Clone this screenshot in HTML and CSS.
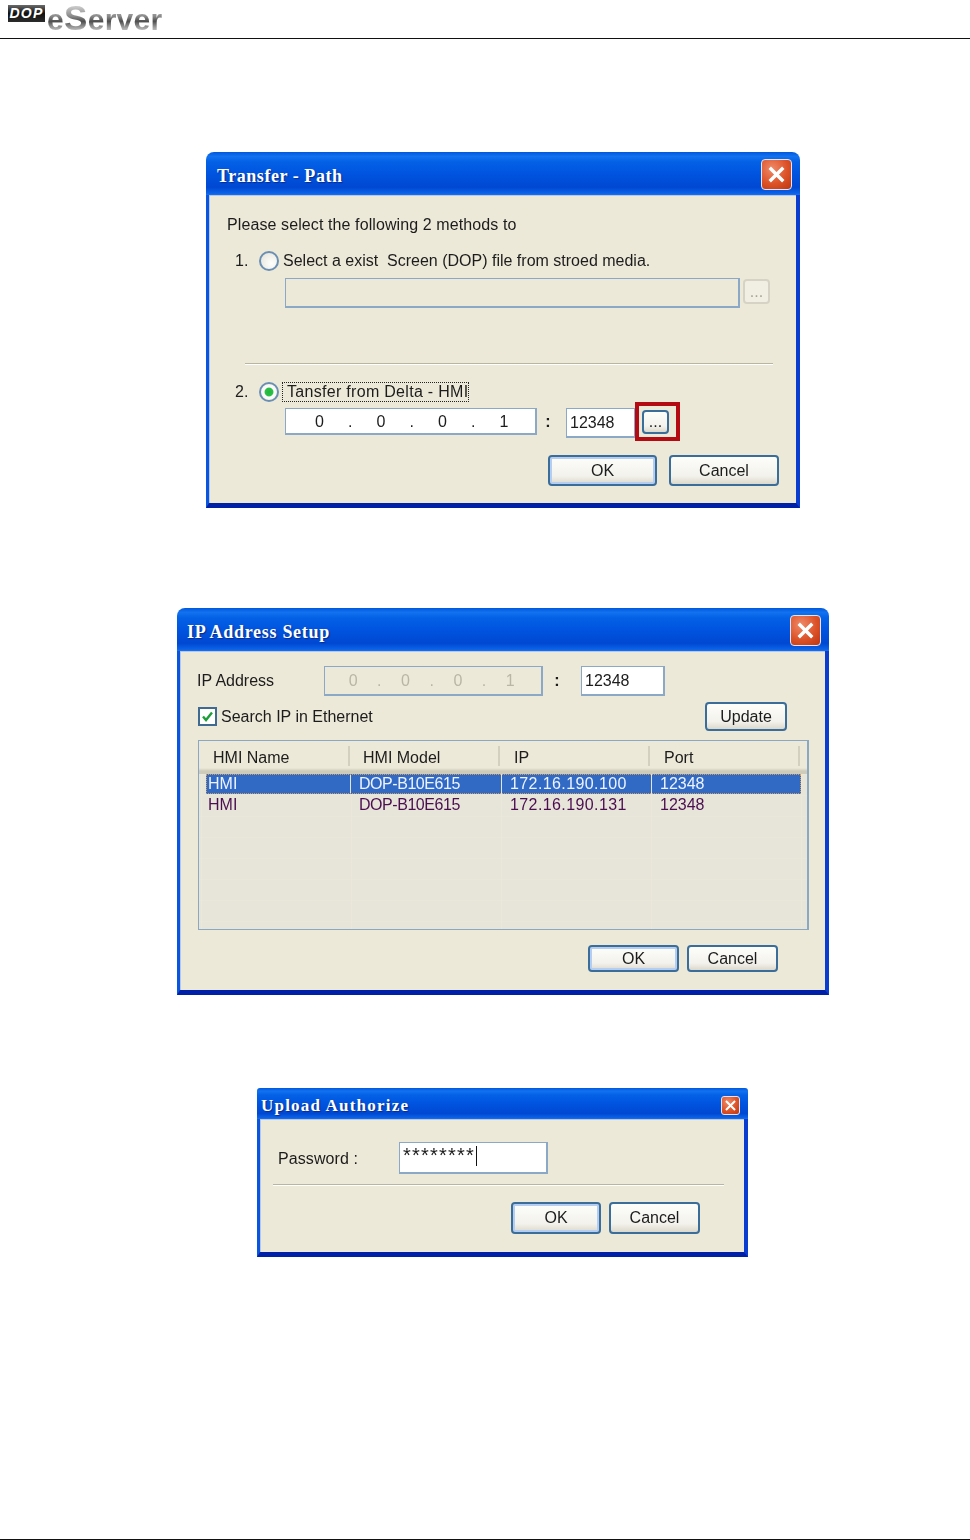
FILE: index.html
```html
<!DOCTYPE html>
<html lang="en">
<head>
    <meta charset="UTF-8">
    <title>DOP eServer - Transfer Path</title>
    <link rel="stylesheet" href="styles.css">
</head>
<body>
    <div class="page">
        <header class="top">
            <div class="dop-logo">DOP</div>
            <div class="eserver-logo">e<span class="big-s">S</span>erver</div>
        </header>

        <main class="content">
            <!-- Transfer path dialog -->
            <section class="dialog dialog-transfer">
                <div class="titlebar">
                    <h2>Transfer - Path</h2>
                    <div class="close">
                        <svg viewBox="0 0 30 30"><path d="M8 8 L22 22 M22 8 L8 22"/></svg>
                    </div>
                </div>
                <div class="panel">
                    <p class="intro">Please select the following 2 methods to</p>
                    <div class="choice">
                        <span class="num">1.</span>
                        <span class="radio"></span>
                        <span class="choice-label">Select a exist&nbsp; Screen (DOP) file from stroed media.</span>
                    </div>
                    <div class="path-row">
                        <div class="field field-off path-field"></div>
                        <div class="btn btn-off browse-off">...</div>
                    </div>
                    <div class="rule rule-transfer"></div>
                    <div class="choice choice-two">
                        <span class="num">2.</span>
                        <span class="radio radio-on"></span>
                        <span class="choice-label focused">Tansfer from Delta - HMI</span>
                    </div>
                    <div class="ip-row">
                        <div class="field ip ip-wide">
                            <span>0</span><span>.</span><span>0</span><span>.</span><span>0</span><span>.</span><span>1</span>
                        </div>
                        <span class="colon">:</span>
                        <div class="field port-wide">12348</div>
                        <div class="highlight">
                            <div class="btn browse">...</div>
                        </div>
                    </div>
                    <div class="actions actions-transfer">
                        <div class="btn btn-default">OK</div>
                        <div class="btn">Cancel</div>
                    </div>
                </div>
            </section>

            <!-- IP setup dialog -->
            <section class="dialog dialog-ip">
                <div class="titlebar">
                    <h2>IP Address Setup</h2>
                    <div class="close">
                        <svg viewBox="0 0 30 30"><path d="M8 8 L22 22 M22 8 L8 22"/></svg>
                    </div>
                </div>
                <div class="panel">
                    <div class="address-row">
                        <span class="address-label">IP Address</span>
                        <div class="field field-off ip ip-narrow">
                            <span>0</span><span>.</span><span>0</span><span>.</span><span>0</span><span>.</span><span>1</span>
                        </div>
                        <span class="colon">:</span>
                        <div class="field port-narrow">12348</div>
                    </div>
                    <div class="search-row">
                        <span class="checkbox">
                            <svg viewBox="0 0 15 15"><path d="M3 7.5 L6 11 L12 3.5"/></svg>
                        </span>
                        <span>Search IP in Ethernet</span>
                        <div class="btn update">Update</div>
                    </div>
                    <div class="list">
                        <div class="list-head">
                            <div>HMI Name</div>
                            <div>HMI Model</div>
                            <div>IP</div>
                            <div>Port</div>
                        </div>
                        <div class="list-rows">
                            <div class="list-row selected">
                                <div>HMI</div>
                                <div>DOP-B10E615</div>
                                <div>172.16.190.100</div>
                                <div>12348</div>
                            </div>
                            <div class="list-row">
                                <div>HMI</div>
                                <div>DOP-B10E615</div>
                                <div>172.16.190.131</div>
                                <div>12348</div>
                            </div>
                        </div>
                    </div>
                    <div class="actions actions-ip">
                        <div class="btn btn-default">OK</div>
                        <div class="btn">Cancel</div>
                    </div>
                </div>
            </section>

            <!-- Password dialog -->
            <section class="dialog dialog-upload">
                <div class="titlebar">
                    <h2>Upload Authorize</h2>
                    <div class="close">
                        <svg viewBox="0 0 30 30"><path d="M7 7 L23 23 M23 7 L7 23"/></svg>
                    </div>
                </div>
                <div class="panel">
                    <div class="password-row">
                        <span class="password-label">Password :</span>
                        <div class="field password-field">********<span class="caret"></span></div>
                    </div>
                    <div class="rule rule-upload"></div>
                    <div class="actions actions-upload">
                        <div class="btn btn-default">OK</div>
                        <div class="btn">Cancel</div>
                    </div>
                </div>
            </section>
        </main>

        <footer class="bottom"></footer>
    </div>
</body>
</html>
```

FILE: styles.css
```css
* {
    box-sizing: border-box;
}

body {
    margin: 0;
    background: #fff;
    color: #1c1c1c;
    font-family: "Liberation Sans", Arial, sans-serif;
    font-size: 16px;
}

.page {
    display: flex;
    flex-direction: column;
    min-height: 1540px;
}

/* page header */
.top {
    display: flex;
    height: 39px;
    border-bottom: 1px solid #111;
    padding-left: 8px;
}

.dop-logo {
    width: 37px;
    height: 17px;
    margin-top: 5px;
    background: linear-gradient(180deg, #6a6a6a, #111 50%, #2c2c2c);
    color: #fff;
    font-size: 14px;
    font-weight: bold;
    font-style: italic;
    line-height: 17px;
    letter-spacing: 1.2px;
    text-align: center;
}

.eserver-logo {
    margin: -1px 0 0 2px;
    height: 36px;
    background: linear-gradient(180deg, #c8c8c8 22%, #8a8a8a 48%, #4e4e4e 62%, #9a9a9a 78%, #c0c0c0 88%);
    -webkit-background-clip: text;
    background-clip: text;
    color: transparent;
    font-size: 30px;
    font-weight: bold;
    line-height: 38px;
    letter-spacing: 0.3px;
    filter: blur(0.4px);
}

.big-s {
    font-size: 35px;
}

.content {
    display: flex;
    flex-direction: column;
    align-items: center;
    padding-left: 36px;
}

.bottom {
    margin-top: auto;
    border-top: 1px solid #111;
}

/* dialog frame */
.dialog {
    overflow: hidden;
    border-radius: 8px 8px 0 0;
    filter: blur(0.3px);
}

.dialog-transfer {
    width: 594px;
    margin-top: 113px;
}

.dialog-ip {
    width: 652px;
    margin-top: 100px;
}

.dialog-upload {
    width: 491px;
    margin: 93px 1px 0 0;
    border-radius: 3px 3px 0 0;
}

.titlebar {
    display: flex;
    align-items: center;
    justify-content: space-between;
    height: 43px;
    padding: 0 8px 0 11px;
    background: linear-gradient(180deg, #0058dc 0, #1272f0 10%, #0462e6 22%, #0054e0 50%, #0048d2 82%, #0a62e8 96%, #1a70ee 100%);
}

.titlebar h2 {
    margin: 5px 0 0;
    color: #fff;
    font-family: "Liberation Serif", serif;
    font-size: 18px;
    font-weight: bold;
    letter-spacing: 0.55px;
    text-shadow: 1px 1px 1px #0a2c8c;
}

.close {
    width: 31px;
    height: 31px;
    margin-top: 2px;
    border: 1px solid #dfe6f2;
    border-radius: 4px;
    background: radial-gradient(circle at 35% 30%, #ef8a68, #dc5228 55%, #bd3510);
}

.close svg {
    display: block;
    width: 100%;
    height: 100%;
}

.close path {
    fill: none;
    stroke: #fff;
    stroke-width: 3.5;
}

.panel {
    border-style: solid;
    border-width: 0 4px 5px 3px;
    border-color: #0a3fd4 #0a3cd0 #0020a8 #0a55e0;
    background: #ece9d8;
    box-shadow: inset 1px 1px 0 #b7c8e6;
}

/* shared controls */
.field {
    display: flex;
    align-items: center;
    border: 1px solid #8ba9c6;
    border-width: 1px 2px 2px 1px;
    background: #fff;
    padding-left: 3px;
}

.field-off {
    background: #ece9d8;
    color: #b9b6a6;
}

.btn {
    display: flex;
    align-items: center;
    justify-content: center;
    width: 110px;
    height: 31px;
    border: 2px solid #3b6d9a;
    border-radius: 4px;
    background: linear-gradient(180deg, #fdfdfb, #f3f2ec 70%, #dcd8cc);
}

.btn-default {
    box-shadow: inset 0 0 0 2px #b4cdf0;
}

.btn-off {
    border-color: #d6d3c5;
    color: #a8a596;
    background: #f1efe4;
}

.actions {
    display: flex;
    justify-content: flex-end;
}

.rule {
    height: 2px;
    background: #b9b5a3;
    border-bottom: 1px solid #fff;
}

.colon {
    width: 28px;
    text-align: center;
    font-weight: bold;
}

.ip span {
    text-align: center;
}

/* transfer dialog */
.dialog-transfer .panel {
    height: 313px;
    padding: 20px 17px 0 18px;
}

.intro {
    height: 20px;
    margin: 0;
    line-height: 20px;
    letter-spacing: 0.1px;
}

.choice {
    display: flex;
    align-items: center;
    height: 22px;
    margin-top: 15px;
}

.choice-two {
    margin-top: 16px;
}

.num {
    width: 32px;
    padding-left: 8px;
}

.radio {
    width: 20px;
    height: 20px;
    flex: none;
    margin-right: 4px;
    border: 2px solid #6b8fb3;
    border-radius: 50%;
    background: radial-gradient(circle at 65% 65%, #fff, #e3e1d6);
}

.radio-on {
    background: radial-gradient(circle, #1fb53a 0, #2cc04a 34%, #fff 44%, #e9e7dc);
}

.focused {
    margin-left: -1px;
    padding: 0 1px 0 5px;
    outline: 1px dotted #222;
    outline-offset: -1px;
    line-height: 20px;
    letter-spacing: 0.3px;
}

.path-row {
    display: flex;
    margin: 6px 0 0 58px;
}

.path-field {
    width: 455px;
    height: 30px;
}

.browse-off {
    width: 27px;
    height: 25px;
    margin: 1px 0 0 3px;
    line-height: 1;
}

.rule-transfer {
    width: 528px;
    margin: 55px 0 0 18px;
}

.ip-row {
    display: flex;
    align-items: flex-start;
    height: 39px;
    margin: -1px 0 0 58px;
}

.ip-row > .field,
.ip-row > .colon {
    margin-top: 6px;
}

.ip-wide {
    width: 252px;
    height: 27px;
    padding: 2px 0 0 18px;
}

.ip-wide span {
    width: 30.75px;
}

.ip-row .colon {
    width: 22px;
    margin-right: 7px;
    line-height: 27px;
}

.port-wide {
    width: 70px;
    height: 30px;
}

.highlight {
    display: flex;
    align-items: center;
    width: 45px;
    height: 39px;
    margin-left: -1px;
    padding-left: 3px;
    border: 4px solid #b30a14;
}

.browse {
    width: 27px;
    height: 24px;
}

.actions-transfer {
    gap: 12px;
    margin-top: 14px;
}

.actions-transfer .btn-default {
    width: 109px;
}

/* ip dialog */
.dialog-ip .panel {
    height: 344px;
    padding: 15px 16px 0 17px;
}

.dialog-ip h2 {
    margin-left: -1px;
    letter-spacing: 0.7px;
}

.address-row {
    display: flex;
    align-items: center;
    height: 30px;
}

.address-label {
    width: 127px;
}

.ip-narrow {
    width: 219px;
    height: 30px;
    padding-left: 15px;
}

.ip-narrow span {
    width: 26.2px;
}

.address-row .colon {
    margin-right: 10px;
}

.port-narrow {
    width: 84px;
    height: 30px;
}

.search-row {
    display: flex;
    align-items: center;
    height: 29px;
    margin: 6px 22px 0 1px;
}

.checkbox {
    width: 19px;
    height: 19px;
    margin-right: 4px;
    border: 2px solid #3f6b93;
    background: #fff;
}

.checkbox svg {
    display: block;
    width: 100%;
    height: 100%;
}

.checkbox path {
    fill: none;
    stroke: #1e9e3a;
    stroke-width: 2.4;
}

.update {
    width: 82px;
    height: 29px;
    margin-left: auto;
}

.list {
    width: 611px;
    height: 190px;
    margin: 9px 0 0 1px;
    border: 2px solid #8aa8c2;
    border-width: 1px 2px 2px 1px;
}

.list-head {
    display: grid;
    grid-template-columns: 151px 150px 150px 150px;
    height: 33px;
    padding-top: 5px;
    background: linear-gradient(180deg, #ece9d8 27px, #cfcbbb 30px);
}

.list-head div {
    height: 20px;
    padding-left: 14px;
    border-right: 2px solid #d4d0c0;
    line-height: 24px;
}

.list-head div:nth-child(2) {
    padding-left: 13px;
}

.list-rows {
    height: 155px;
    padding: 0 0 0 7px;
    background-color: #e7e4da;
    background-image:
        linear-gradient(90deg, #ebe8da 1px, transparent 1px),
        linear-gradient(180deg, #e9e6da 1px, transparent 1px);
    background-size: 150px 100%, 100% 21px;
    background-position: 2px 0, 0 0;
}

.list-row {
    display: grid;
    grid-template-columns: 145px 151px 150px 149px;
    width: 595px;
    height: 20px;
    margin-bottom: 1px;
    color: #4b0f50;
    line-height: 20px;
}

.list-row div {
    padding-left: 2px;
    border-right: 1px solid transparent;
}

.list-row div + div {
    padding-left: 8px;
}

.list-row div:nth-child(2) {
    letter-spacing: -0.45px;
}

.list-row div:nth-child(3) {
    letter-spacing: 0.4px;
}

.selected {
    color: #eef3ff;
    background: #316ac5;
    outline: 1px dotted #d69a55;
    outline-offset: -1px;
}

.selected div {
    border-right-color: #e7e4da;
}

.selected div:last-child {
    border-right-color: transparent;
}

.actions-ip {
    gap: 8px;
    margin: 15px 31px 0 0;
}

.actions-ip .btn {
    width: 91px;
    height: 27px;
}

/* upload dialog */
.dialog-upload .titlebar {
    height: 31px;
    padding: 0 8px 0 4px;
}

.dialog-upload h2 {
    margin-top: 4px;
    font-size: 17px;
    letter-spacing: 1.2px;
}

.dialog-upload .close {
    width: 19px;
    height: 19px;
    margin-top: 3px;
    border-radius: 3px;
}

.dialog-upload .panel {
    height: 138px;
    padding: 23px 0 0 18px;
}

.password-row {
    display: flex;
    align-items: center;
}

.password-label {
    width: 121px;
    margin-top: 2px;
    letter-spacing: 0.1px;
}

.password-field {
    width: 149px;
    height: 32px;
    align-items: flex-start;
    font-size: 20px;
    line-height: 24px;
    letter-spacing: 1.2px;
}

.caret {
    width: 1.5px;
    height: 20px;
    margin: 3px 0 0 1px;
    background: #111;
}

.rule-upload {
    width: 451px;
    margin: 10px 0 0 -5px;
}

.actions-upload {
    gap: 8px;
    margin: 16px 44px 0 0;
}

.actions-upload .btn {
    width: 91px;
    height: 32px;
}

.actions-upload .btn-default {
    width: 90px;
}
```
